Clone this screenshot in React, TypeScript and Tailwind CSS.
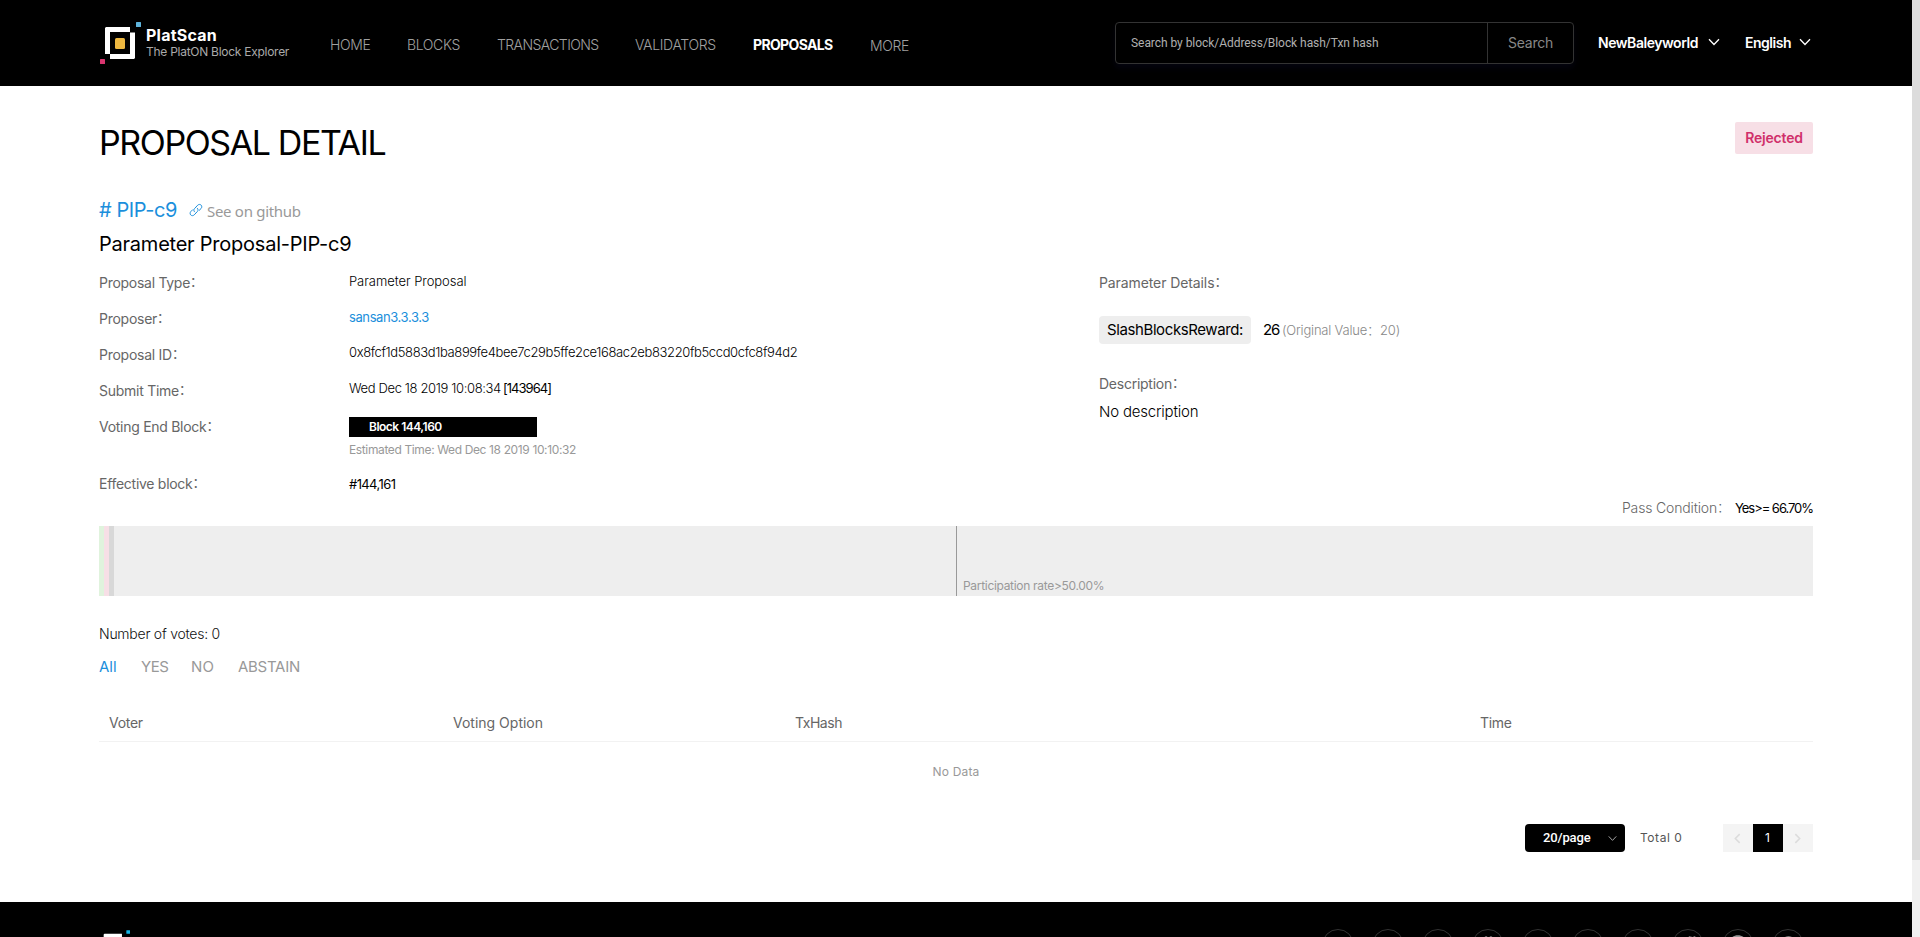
import type { ReactNode } from "react";
import { FaBitcoin, FaDiscord, FaFacebookF, FaGithub, FaLinkedinIn, FaMedium, FaRedditAlien, FaSlack, FaTelegramPlane, FaTwitter } from "react-icons/fa";

const nav = [
  { label: "HOME", cls: "w-[77px] tracking-[-0.36px]" },
  { label: "BLOCKS", cls: "w-[90px] tracking-[-0.37px]" },
  { label: "TRANSACTIONS", cls: "w-[138px] tracking-[-0.58px]" },
  { label: "VALIDATORS", cls: "w-[118px] tracking-[-0.35px]" },
  { label: "PROPOSALS", cls: "w-[117px] tracking-[-0.65px] font-bold text-white" },
  { label: "MORE", cls: "tracking-[-0.36px] pt-px" },
];

const social = [
  { Icon: FaTelegramPlane, cls: "h-[14px] w-[14px]" },
  { Icon: FaLinkedinIn, cls: "h-[14px] w-[14px]" },
  { Icon: FaTwitter, cls: "h-[14px] w-[14px]" },
  { Icon: FaSlack, cls: "h-[21px] w-[21px]" },
  { Icon: FaFacebookF, cls: "h-[14px] w-[14px]" },
  { Icon: FaMedium, cls: "h-[19px] w-[19px]" },
  { Icon: FaDiscord, cls: "h-[22px] w-[22px]" },
  { Icon: FaRedditAlien, cls: "h-[20px] w-[20px]" },
  { Icon: FaGithub, cls: "h-[20px] w-[20px]" },
  { Icon: FaBitcoin, cls: "h-[19px] w-[19px]" },
];

function Logo({ className, accent = "#5fb4dc" }: { className: string; accent?: string }) {
  return (
    <svg viewBox="0 0 41 42" className={className}>
      <rect x="36" width="5" height="5" rx="0.5" fill={accent} />
      <rect y="37" width="5" height="5" rx="0.5" fill="#d8356f" />
      <path d="M6 5h24v5H10v22H5V6z" fill="#fff" />
      <path d="M30 10.5h5V36l-1 1H10v-5h20z" fill="#fff" />
      <rect x="15" y="16" width="10" height="11" rx="1.5" fill="#ecb740" />
    </svg>
  );
}

function Chevron({ className }: { className: string }) {
  return (
    <svg viewBox="0 0 12 8" className={className} fill="none" stroke="currentColor" strokeWidth="1.3">
      <path d="M1 1.2 6 6.5l5-5.3" />
    </svg>
  );
}

function Colon() {
  return <span className="w-[13px] pb-[3px] font-['Noto_Sans_CJK_SC',sans-serif] text-[13px] leading-none tracking-normal">：</span>;
}

function Label({ children, className = "" }: { children: ReactNode; className?: string }) {
  return (
    <div className={`flex items-center h-9 w-[250px] shrink-0 whitespace-nowrap text-[14px] text-[#666] ${className}`}>
      {children}
      <Colon />
    </div>
  );
}

function Value({ children, className = "" }: { children: ReactNode; className?: string }) {
  return <div className={`h-[34px] leading-[34px] whitespace-nowrap text-[13px] ${className}`}>{children}</div>;
}

function Header() {
  return (
    <header className="flex h-[86px] bg-black pl-[100px] text-[14px]">
      <Logo className="mt-[22px] h-[42px] w-[41px] shrink-0" />
      <div className="ml-[5px] mt-[26px] w-[184px] shrink-0 whitespace-nowrap">
        <div className="h-[18px] text-[16px] leading-[18px] font-bold tracking-[0.23px] text-white">PlatScan</div>
        <div className="h-4 text-[12px] leading-4 tracking-[-0.27px] text-[#aaa]">The PlatON Block Explorer</div>
      </div>
      <nav className="mt-[35px] flex w-[785px] shrink-0 font-light leading-5 text-[#a0a0a0]">
        {nav.map((n) => (
          <a key={n.label} className={n.cls}>{n.label}</a>
        ))}
      </nav>
      <div className="mt-[22px] flex h-[42px] w-[459px] shrink-0 rounded-[4px] border border-[#333] shadow-[0_4px_6px_#04040f]">
        <div className="w-[372px] whitespace-nowrap border-r border-[#333] pl-[15px] font-['Roboto',sans-serif] text-[12px] leading-[40px] tracking-[-0.05px] text-[#b0b0b0]">
          Search by block/Address/Block hash/Txn hash
        </div>
        <div className="flex-1 text-center leading-[40px] tracking-[-0.24px] text-[#888]">Search</div>
      </div>
      <div className="ml-[24px] mt-[32px] flex h-5 items-center font-semibold whitespace-nowrap text-white">
        <span className="w-[110px] tracking-[-0.45px]">NewBaleyworld</span>
        <Chevron className="h-2 w-3" />
        <span className="ml-[25px] w-[54px] tracking-[-0.48px]">English</span>
        <Chevron className="h-2 w-3" />
      </div>
    </header>
  );
}

export default function App() {
  return (
    <div className="flex h-[937px] w-[1920px] overflow-hidden bg-white font-['Inter','Noto_Sans_CJK_SC',sans-serif] text-black">
      <div className="flex w-[1912px] flex-col">
        <Header />
        <main className="flex h-[816px] flex-col px-[99px]">
          <div className="flex h-[109px] justify-between">
            <h1 className="mt-[35px] text-[34px] leading-[44px] font-normal tracking-[-1.4px]">PROPOSAL DETAIL</h1>
            <div className="mt-9 h-8 w-[78px] rounded-[2px] bg-[#f7dfe6] text-center text-[14px] leading-8 font-semibold tracking-[-0.2px] text-[#d0306a]">Rejected</div>
          </div>
          <div className="flex h-[34px] items-start whitespace-nowrap">
            <span className="w-[90px] text-[20px] leading-[31px] tracking-[-0.42px] text-[#1b8fdc]"># PIP-c9</span>
            <svg viewBox="0 0 14 14" className="mt-2 h-[14px] w-[14px]" fill="none" stroke="#1b8fdc" strokeWidth="1" strokeLinecap="round">
              <path d="M5.600 8.900c-1-.9-1-2.300-.1-3.300L8.700 2.200c1-1 2.500-1 3.400-.1s.9 2.400 0 3.400L10.300 7.300" />
              <path d="M8.300 5.200c1 .9 1 2.300.1 3.300L5.200 11.900c-1 1-2.500 1-3.400.1s-.9-2.400 0-3.400L3.600 6.800" />
            </svg>
            <span className="ml-1 font-['Noto_Sans',sans-serif] text-[15px] leading-[33px] tracking-[-0.3px] text-[#999]">See on github</span>
          </div>
          <h2 className="h-[35px] text-[20px] leading-[31px] tracking-[-0.23px]">Parameter Proposal-PIP-c9</h2>

          <div className="flex h-[235px]">
            <div className="w-[1000px]">
              <div className="flex h-9">
                <Label className="tracking-[-0.28px]">Proposal Type</Label>
                <Value className="font-light tracking-[-0.05px]">Parameter Proposal</Value>
              </div>
              <div className="flex h-9">
                <Label className="tracking-[-0.26px]">Proposer</Label>
                <Value className="tracking-[-0.4px] text-[#1b8fdc]">sansan3.3.3.3</Value>
              </div>
              <div className="flex h-9">
                <Label className="tracking-[-0.26px]">Proposal ID</Label>
                <Value className="-mt-px font-light tracking-[-0.37px]">0x8fcf1d5883d1ba899fe4bee7c29b5ffe2ce168ac2eb83220fb5ccd0cfc8f94d2</Value>
              </div>
              <div className="flex h-9">
                <Label className="tracking-[-0.26px]">Submit Time</Label>
                <Value className="-mt-px flex">
                  <span className="w-[154px] font-light tracking-[-0.36px]">Wed Dec 18 2019 10:08:34</span>
                  <span className="tracking-[-0.96px]">[143964]</span>
                </Value>
              </div>
              <div className="flex h-[59px]">
                <Label className="tracking-[-0.28px]">Voting End Block</Label>
                <div className="pt-[9px] text-[12px] whitespace-nowrap">
                  <div className="h-5 w-[188px] bg-black pl-5 leading-5 font-semibold tracking-[-0.5px] text-white">Block 144,160</div>
                  <div className="mt-[5px] leading-4 tracking-[-0.37px] text-[#999]">Estimated Time: Wed Dec 18 2019 10:10:32</div>
                </div>
              </div>
              <div className="-mt-0.5 flex h-[34px]">
                <Label className="tracking-[-0.28px]">Effective block</Label>
                <Value className="pt-[2px] tracking-[-0.6px]">#144,161</Value>
              </div>
            </div>
            <div className="whitespace-nowrap">
              <Label className="tracking-[-0.1px]">Parameter Details</Label>
              <div className="mt-4 flex h-7 items-center">
                <span className="h-7 w-[152px] rounded-[4px] bg-[#eee] pl-2 text-[15px] leading-7 tracking-[-0.4px]">SlashBlocksReward:</span>
                <span className="ml-3 w-[19px] text-[15px] tracking-[-1.2px]">26</span>
                <span className="flex items-center pt-px text-[13px] font-light tracking-[-0.2px] text-[#888]">
                  (Original Value<Colon />20)
                </span>
              </div>
              <Label className="mt-[21px] tracking-[-0.25px]">Description</Label>
              <div className="mt-px text-[15px] leading-5 font-light tracking-[-0.2px]">No description</div>
            </div>
          </div>

          <div className="flex h-[27px] justify-end whitespace-nowrap text-[14px] leading-[18px]">
            <span className="flex h-[18px] w-[113px] items-center font-light tracking-[-0.16px] text-[#666]">
              Pass Condition<Colon />
            </span>
            <span className="text-[13px] tracking-[-1.04px]">Yes&gt;= 66.70%</span>
          </div>

          <div className="flex h-[70px] shrink-0 bg-[#eee]">
            <div className="w-[5px] bg-[#e0f3dd]" />
            <div className="w-[5px] bg-[#f7dfe6]" />
            <div className="w-[5px] bg-[#d8d8d8]" />
            <div className="ml-[842px] flex items-end border-l border-[#999] pb-[2px] pl-[6px] text-[12px] leading-4 tracking-[-0.31px] text-[#999]">
              Participation rate&gt;50.00%
            </div>
          </div>

          <div className="mt-7 text-[14px] leading-5 font-light tracking-[-0.25px] text-[#111]">Number of votes: 0</div>
          <div className="mt-[13px] flex text-[15px] leading-5 text-[#999]">
            <span className="w-[42px] text-[#1b8fdc]">All</span>
            <span className="w-[50px] tracking-[-0.5px]">YES</span>
            <span className="w-[47px] tracking-[0.2px]">NO</span>
            <span className="tracking-[-0.27px]">ABSTAIN</span>
          </div>

          <div className="mt-7 flex h-[37px] shrink-0 border-b border-[#f2f2f2] pl-[10px] text-[14px] leading-9 tracking-[-0.3px] text-[#666]">
            <span className="w-[344px]">Voter</span>
            <span className="w-[342px] tracking-normal">Voting Option</span>
            <span className="w-[685px] tracking-[-0.46px]">TxHash</span>
            <span>Time</span>
          </div>
          <div className="h-[60px] shrink-0 text-center text-[12px] leading-[60px] tracking-[0.18px] text-[#999]">No Data</div>

          <div className="mt-[22px] flex h-7 shrink-0 justify-end text-[12px] leading-7">
            <div className="flex w-[100px] items-center rounded-[4px] bg-black pl-[18px] text-white">
              <span className="w-[65px] font-['Roboto',sans-serif] text-[13px] font-medium leading-7 tracking-[-0.15px]">20/page</span>
              <Chevron className="h-[7px] w-[9px] text-[#aaa]" />
            </div>
            <span className="ml-[15px] w-[83px] tracking-[0.55px] text-[#555]">Total 0</span>
            <div className="flex w-[30px] items-center justify-center bg-[#f4f4f4] pr-px">
              <svg viewBox="0 0 8 12" className="h-[11px] w-[7px]" fill="none" stroke="#dcdcdc" strokeWidth="1.8"><path d="M6.500 1 1.500 6l5 5" /></svg>
            </div>
            <div className="w-[30px] bg-black pr-px text-center text-white">1</div>
            <div className="flex w-[30px] items-center justify-center bg-[#f4f4f4] pr-px">
              <svg viewBox="0 0 8 12" className="h-[11px] w-[7px]" fill="none" stroke="#dcdcdc" strokeWidth="1.8"><path d="m1.500 1 5 5-5 5" /></svg>
            </div>
          </div>
        </main>
        <footer className="flex h-[35px] justify-between overflow-hidden bg-black pr-[108px] pl-[100px]">
          <Logo className="mt-7 h-[31px] w-[30px] shrink-0" accent="#14b4e6" />
          <div className="mt-[27px] flex h-8 gap-[18px]">
            {social.map(({ Icon, cls }, i) => (
              <span key={i} className="flex h-8 w-8 items-center justify-center rounded-full border border-[#333] text-[#999]">
                <Icon className={cls} />
              </span>
            ))}
          </div>
        </footer>
      </div>
      <div className="w-2 bg-[#f0f0f0]">
        <div className="h-[860px] bg-[#dcdcdc]" />
      </div>
    </div>
  );
}
